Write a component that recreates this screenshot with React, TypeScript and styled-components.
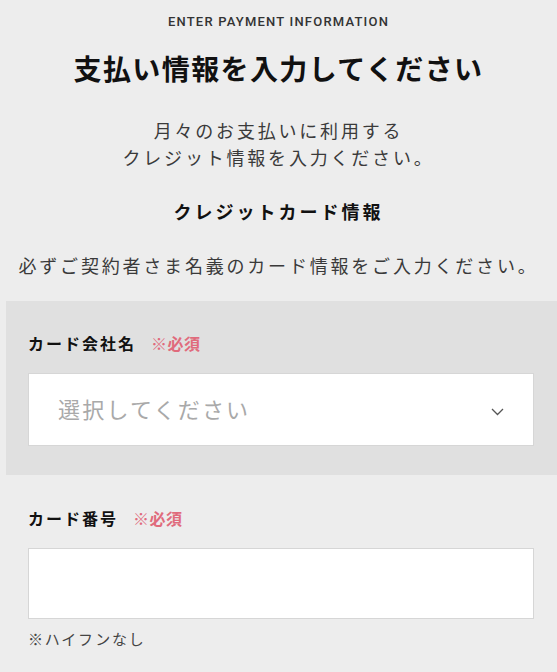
import React from "react";
import styled, { createGlobalStyle } from "styled-components";

const Global = createGlobalStyle`
  html, body { margin: 0; padding: 0; background: #ededed; }
  body { font-family: "Noto Sans CJK JP", "Noto Sans", sans-serif; color: #222; }
  * { box-sizing: border-box; }
`;

const Page = styled.div`
  width: 557px;
  min-height: 672px;
  background: #ededed;
  padding-top: 12px;
  overflow: hidden;
`;

const Eyebrow = styled.div`
  font-family: Roboto, "Noto Sans", sans-serif;
  font-weight: 500;
  font-size: 13px;
  line-height: 20px;
  letter-spacing: 1.2px;
  text-align: center;
  color: #333;
`;

const Heading = styled.h1`
  margin: 16px 0 0;
  font-size: 28px;
  line-height: 40px;
  font-weight: 700;
  letter-spacing: 1.4px;
  text-align: center;
  color: #111;
`;

const Lead = styled.p<{ $gap: number; $bold?: boolean }>`
  margin: ${(p) => p.$gap}px 0 0;
  font-size: 18px;
  line-height: 27px;
  letter-spacing: ${(p) => (p.$bold ? "3px" : "2.8px")};
  font-weight: ${(p) => (p.$bold ? 700 : 400)};
  color: ${(p) => (p.$bold ? "#111" : "#3a3a3a")};
  text-align: center;
  white-space: nowrap;
`;

const Field = styled.section<{ $shaded?: boolean; $top: number }>`
  margin: ${(p) => p.$top}px 0 0 6px;
  padding: ${(p) => (p.$shaded ? "30px 23px 29px 22px" : "0 23px 0 22px")};
  background: ${(p) => (p.$shaded ? "#e0e0e0" : "transparent")};
`;

const Label = styled.div`
  display: flex;
  align-items: center;
  gap: 15px;
  font-size: 16px;
  line-height: 24px;
  font-weight: 700;
  letter-spacing: 2px;
  color: #111;
`;

const Required = styled.span`
  color: #e06b7c;
  font-weight: 700;
  letter-spacing: 0.5px;
`;

const SelectBox = styled.div`
  margin-top: 18px;
  height: 73px;
  background: #fff;
  border: 1px solid #d6d6d6;
  display: flex;
  align-items: center;
  justify-content: space-between;
  padding: 0 29px 0 29px;
`;

const Placeholder = styled.span`
  font-size: 22px;
  letter-spacing: 2.2px;
  color: #a9a9a9;
  margin-top: -4px;
`;

const Chevron = styled.svg`
  width: 13px;
  height: 8px;
  margin-top: 4px;
`;

const TextInput = styled.div`
  margin-top: 18px;
  height: 71px;
  background: #fff;
  border: 1px solid #d6d6d6;
`;

const Note = styled.div`
  margin-top: 10px;
  font-size: 15px;
  line-height: 20px;
  letter-spacing: 1.8px;
  color: #444;
`;

export default function App() {
  return (
    <>
      <Global />
      <Page>
        <Eyebrow>ENTER PAYMENT INFORMATION</Eyebrow>
        <Heading>支払い情報を入力してください</Heading>
        <Lead $gap={29}>
          月々のお支払いに利用する
          <br />
          クレジット情報を入力ください。
        </Lead>
        <Lead $gap={27} $bold>
          クレジットカード情報
        </Lead>
        <Lead $gap={27}>必ずご契約者さま名義のカード情報をご入力ください。</Lead>

        <Field $shaded $top={22}>
          <Label>
            カード会社名<Required>※必須</Required>
          </Label>
          <SelectBox>
            <Placeholder>選択してください</Placeholder>
            <Chevron viewBox="0 0 13 8" fill="none">
              <path d="M1 1l5.5 5.5L12 1" stroke="#555" strokeWidth="1.3" />
            </Chevron>
          </SelectBox>
        </Field>

        <Field $top={31}>
          <Label>
            カード番号<Required>※必須</Required>
          </Label>
          <TextInput />
          <Note>※ハイフンなし</Note>
        </Field>
      </Page>
    </>
  );
}
